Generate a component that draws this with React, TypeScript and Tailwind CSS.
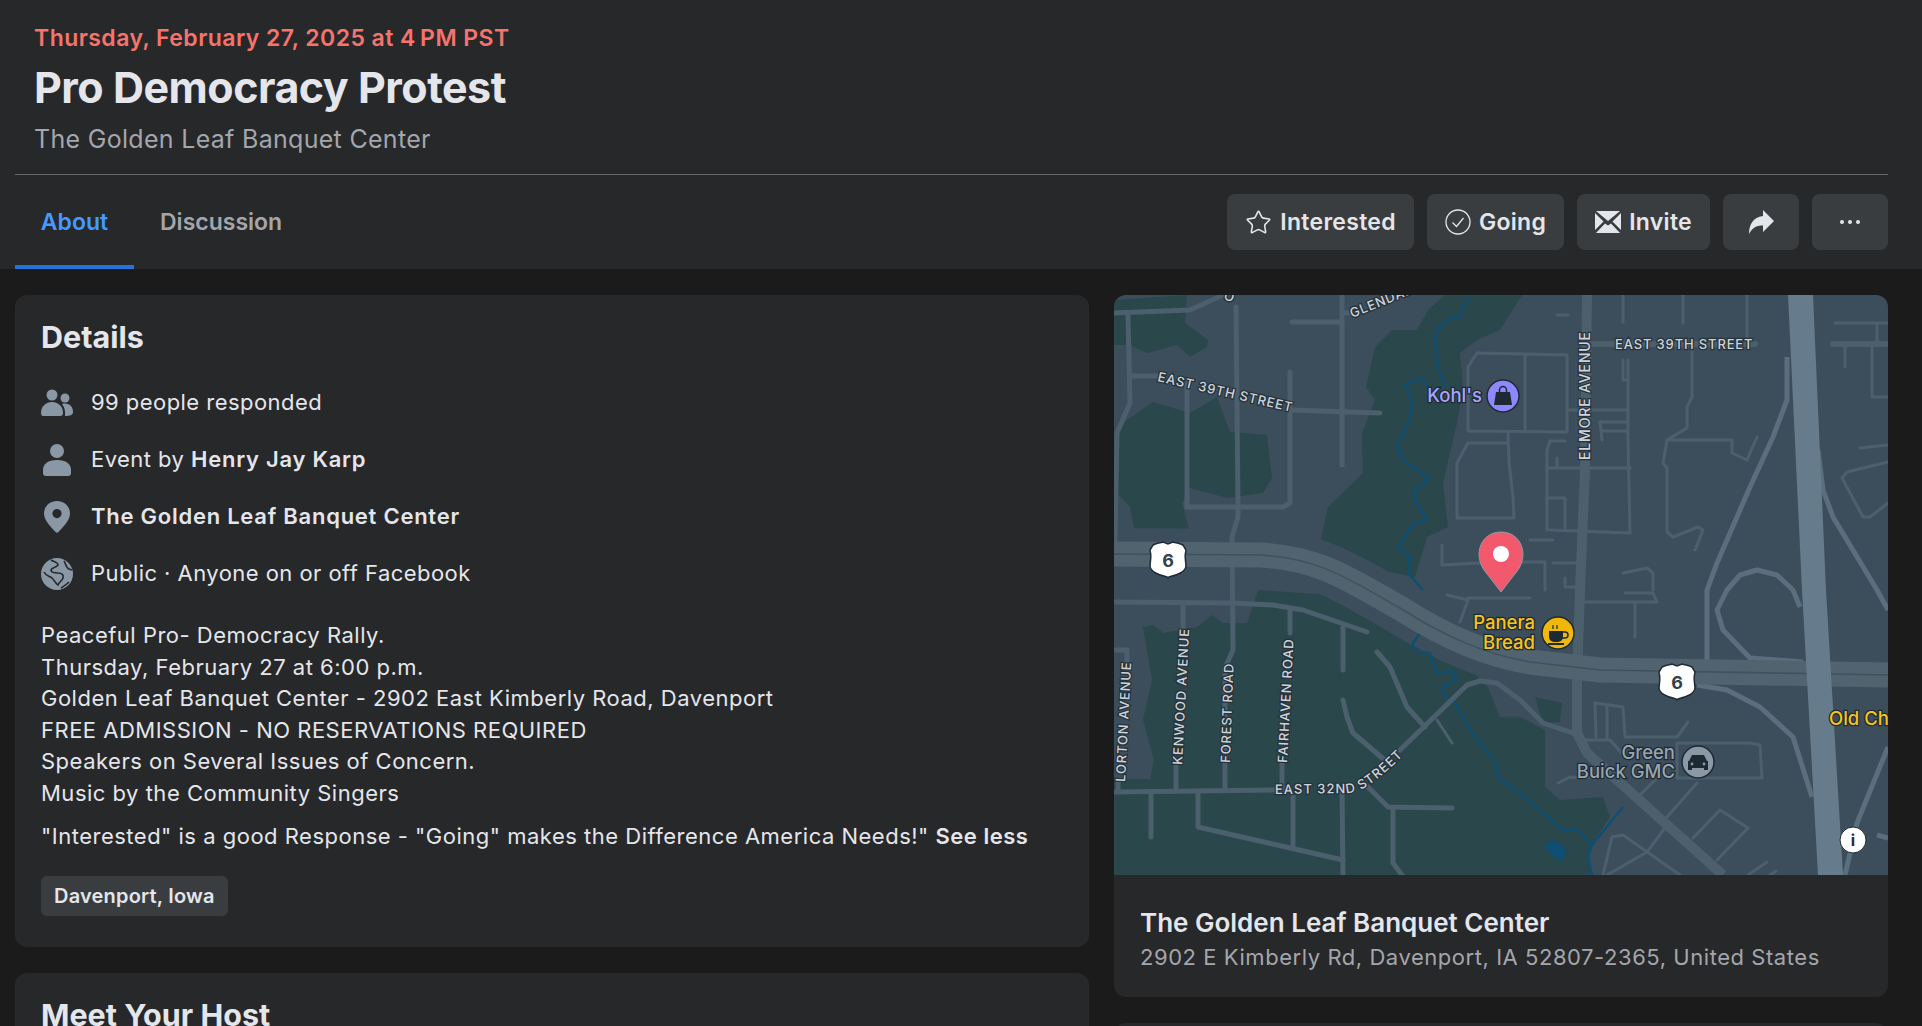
import { Star } from "lucide-react";

const thinRoads = [
  "1114,313 1190,310 1223,295",
  "1128,315 1130,403 1117,433 1115,542",
  "1130,376 1157,376",
  "1187,382 1187,507 1283,507 1290,503 1290,372",
  "1290,410 1380,413",
  "1342,297 1342,465",
  "1292,322 1342,322",
  "1343,313 1352,313",
  "1236,307 1238,507 1238,517 1232,537 1233,650 1225,668 1225,790",
  "1114,602 1233,603 1273,605 1303,610 1367,632",
  "1183,605 1183,627",
  "1176,765 1176,790",
  "1290,610 1290,633",
  "1282,763 1282,790",
  "1114,792 1277,790",
  "1151,792 1151,837",
  "1198,792 1198,827 1343,860",
  "1293,793 1293,847",
  "1342,790 1343,875",
  "1343,627 1343,670",
  "1343,700 1347,717 1353,733 1387,762",
  "1377,652 1390,667 1407,707 1425,727",
  "1400,750 1467,685 1480,681 1497,683 1520,700 1543,723 1573,733",
  "1368,787 1388,807 1452,808",
  "1393,808 1393,863 1402,875",
  "1114,650 1127,650 1127,662",
  "1118,782 1118,792",
];

const lotRoads = [
  "1468,430 1468,367 1477,353 1567,355 1567,432 1468,431",
  "1525,355 1525,432",
  "1508,432 1509,463 1513,497 1514,518 1457,518 1457,463 1468,443 1508,443",
  "1442,545 1442,565 1480,563",
  "1568,410 1628,410",
  "1628,360 1628,437 1630,533 1550,530",
  "1623,360 1623,380 1628,380",
  "1600,422 1628,422",
  "1600,422 1602,440",
  "1602,431 1628,431",
  "1547,468 1630,468",
  "1565,441 1550,441 1547,450 1547,530",
  "1547,498 1565,498 1565,528",
  "1557,458 1557,468",
  "1530,540 1553,540",
  "1517,562 1545,562 1545,590",
  "1553,563 1578,563",
  "1565,578 1565,587 1577,587",
  "1623,573 1647,568 1653,573 1653,590",
  "1623,295 1623,322",
  "1683,295 1683,323",
  "1747,295 1747,337",
  "1557,315 1568,315",
  "1692,350 1692,397 1687,407 1687,428 1667,440 1663,463 1667,468 1667,532 1673,537 1698,527 1703,530 1695,550",
  "1667,440 1732,440 1732,453 1747,460 1757,437",
  "1835,323 1888,323",
  "1877,323 1877,342",
  "1845,347 1845,367",
  "1872,347 1872,397 1888,397",
  "1860,448 1888,445",
  "1888,462 1847,472 1842,478 1863,517 1870,517 1888,503",
  "1447,595 1468,600 1460,622",
  "1468,598 1530,598",
  "1583,602 1657,602 1653,593 1625,593",
  "1635,603 1635,637",
  "1437,720 1452,743",
  "1595,703 1623,707 1625,737 1677,737 1688,722",
  "1595,703 1596,737",
  "1607,705 1607,740",
  "1583,740 1610,740 1625,757",
  "1677,743 1750,743 1760,745 1762,778 1677,778 1677,743",
  "1640,795 1657,778",
  "1667,817 1697,783",
  "1693,838 1720,810 1748,828 1717,860",
  "1647,852 1665,828",
  "1603,875 1612,837 1623,835 1680,875",
  "1607,875 1647,852",
  "1748,875 1767,862",
  "1770,875 1776,871",
  "1558,783 1570,777 1605,778",
];

function StreetLabel({ x, y, angle, size = 13, children }: { x: number; y: number; angle: number; size?: number; children: string }) {
  return (
    <text
      transform={`translate(${x} ${y}) rotate(${angle})`}
      fill="#ced4da"
      stroke="#26323b"
      strokeWidth="2.5"
      fontSize={size}
      fontWeight="500"
      letterSpacing="0.85"
      className="[paint-order:stroke]"
    >
      {children}
    </text>
  );
}

function Shield({ x, y }: { x: number; y: number }) {
  return (
    <g transform={`translate(${x} ${y})`}>
      <path
        d="M-15 -15 C-11 -17 -8 -17 -5 -18 L0 -16 L5 -18 C8 -17 11 -17 15 -15 C16 -13 18 -11 18 -9 C16 -4 18 2 18 6 C17 13 8 15 1 17 L0 18 L-1 17 C-8 15 -17 13 -18 6 C-18 2 -16 -4 -18 -9 C-18 -11 -16 -13 -15 -15 Z"
        fill="#fff"
        stroke="#1f2b34"
        strokeWidth="1.5"
      />
      <text y="7" textAnchor="middle" fontSize="18" fontWeight="700" fill="#33414d">6</text>
    </g>
  );
}

function PoiText({ x, y, fill, children, size = 18.5 }: { x: number; y: number; fill: string; children: string; size?: number }) {
  return (
    <text x={x} y={y} textAnchor="end" fontSize={size} fontWeight="500" fill={fill} stroke="#1e2a33" strokeWidth="2.5" className="[paint-order:stroke]">
      {children}
    </text>
  );
}

function MapView() {
  return (
    <svg viewBox="1114 295 774 580" className="block h-[580px] w-[774px] bg-[#3c4e5c] font-['Inter',sans-serif]">
      {/* parks */}
      <g fill="#2a474c">
        <polygon points="1114,300 1187,295 1185,323 1208,340 1207,347 1190,357 1177,345 1147,353 1130,345 1114,345" />
        <polygon points="1120,425 1153,402 1190,413 1217,397 1230,432 1267,435 1272,478 1263,493 1227,498 1190,488 1182,503 1190,533 1135,533 1130,507 1117,493 1118,433" />
        <polygon points="1428,310 1445,295 1522,295 1500,330 1477,340 1460,353 1463,390 1457,423 1443,483 1448,527 1427,537 1415,577 1380,570 1318,552 1328,507 1363,473 1362,433 1375,400 1366,387 1375,347 1392,330 1417,330" />
        <polygon points="1143,627 1153,625 1163,633 1197,627 1212,615 1223,623 1247,623 1258,590 1400,600 1488,687 1500,717 1520,717 1545,730 1545,787 1560,800 1603,797 1610,817 1590,847 1590,875 1114,875 1114,779 1150,779 1154,760 1143,720 1152,680" />
        <polygon points="1535,697 1562,703 1560,722 1543,723" />
      </g>

      {/* band under the highway */}
      <path d="M1114 554 L1260 555 C1320 558 1350 580 1400 608 C1450 640 1490 655 1530 662" fill="none" stroke="#3c4e5c" strokeWidth="52" />

      {/* river */}
      <g fill="none" stroke="#0e4f73" strokeWidth="2.5" strokeLinejoin="round">
        <polyline points="1470,295 1462,310 1460,317 1450,318 1438,328 1435,337 1438,367 1444,383 1444,388" />
        <polyline points="1427,385 1420,378 1405,385 1412,400 1410,420 1397,447 1403,460 1428,477 1427,482 1415,488 1415,500 1427,520 1412,525 1398,547 1410,557 1408,573 1423,590" />
        <polyline points="1420,633 1412,645 1420,652 1430,653 1437,673 1452,671 1457,678 1442,688 1445,697 1455,703 1472,733 1495,762 1498,778 1520,793 1563,830 1578,830 1592,845 1588,857 1592,875" />
        <polyline points="1592,845 1623,807" />
      </g>
      <polygon points="1545,845 1553,840 1565,847 1565,857 1560,862 1545,848" fill="#0e4f73" />

      {/* streets */}
      <g fill="none" stroke="#4c5f6d" strokeWidth="5" strokeLinecap="round" strokeLinejoin="round">
        {thinRoads.map((p) => (
          <polyline key={p} points={p} />
        ))}
      </g>
      <g fill="none" stroke="#4c5f6d" strokeWidth="3" strokeLinecap="round" strokeLinejoin="round">
        {lotRoads.map((p) => (
          <polyline key={p} points={p} />
        ))}
      </g>
      <g fill="none" stroke="#4c5f6d" strokeWidth="6" strokeLinecap="round">
        <polyline points="1593,344 1755,344" />
        <polyline points="1833,344 1888,344" />
        <polyline points="1587,295 1585,470 1580,590 1577,683 1577,733 1587,753 1723,875" strokeWidth="10" strokeLinecap="butt" />
      </g>

      {/* ramps */}
      <g fill="none" stroke="#5a6e7d" strokeWidth="5" strokeLinejoin="round">
        <polyline points="1787,357 1787,400 1773,437 1750,487 1717,563 1707,590 1707,660" />
        <path d="M1803 662 L1750 658 L1723 630 L1717 610 L1727 590 L1740 575 L1757 570 L1777 575 L1793 590 L1800 607" />
        <polyline points="1818,450 1823,490 1833,517 1877,590 1888,610" />
        <path d="M1697 685 L1727 690 L1760 707 L1793 737 L1812 797" />
        <polyline points="1888,747 1857,823 1845,875" />
        <polyline points="1877,835 1888,838" />
      </g>

      {/* highway 6 */}
      <path d="M1114 554 L1260 555 C1320 558 1350 580 1400 608 C1450 640 1490 655 1530 662 L1600 670 L1888 675" fill="none" stroke="#50636f" strokeWidth="25" />
      <path d="M1114 554 L1260 555 C1320 558 1350 580 1400 608 C1450 640 1490 655 1530 662 L1600 670 L1888 675" fill="none" stroke="#3f5260" strokeWidth="1.5" />

      {/* interstate */}
      <polygon points="1788,295 1813,295 1826,590 1843,875 1818,875 1802,590" fill="#667b8b" />

      {/* street names */}
      <StreetLabel x={1157} y={381} angle={13}>EAST 39TH STREET</StreetLabel>
      <StreetLabel x={1352} y={318} angle={-22}>GLENDALE</StreetLabel>
      <StreetLabel x={1223} y={299} angle={20}>O</StreetLabel>
      <StreetLabel x={1590} y={460} angle={-90} size={14}>ELMORE AVENUE</StreetLabel>
      <StreetLabel x={1615} y={349} angle={0}>EAST 39TH STREET</StreetLabel>
      <StreetLabel x={1125} y={782} angle={-87}>LORTON AVENUE</StreetLabel>
      <StreetLabel x={1182} y={765} angle={-87}>KENWOOD AVENUE</StreetLabel>
      <StreetLabel x={1230} y={763} angle={-88}>FOREST ROAD</StreetLabel>
      <StreetLabel x={1287} y={763} angle={-87}>FAIRHAVEN ROAD</StreetLabel>
      <path id="east-32" d="M1275 794 L1350 793 C1362 792 1378 780 1404 755" fill="none" />
      <text fill="#ced4da" stroke="#26323b" strokeWidth="2.5" fontSize="13" fontWeight="500" letterSpacing="1" className="[paint-order:stroke]">
        <textPath href="#east-32">EAST 32ND STREET</textPath>
      </text>

      <Shield x={1168} y={560} />
      <Shield x={1677} y={682} />

      {/* kohl's */}
      <PoiText x={1482} y={402} fill="#a9a4ff">Kohl's</PoiText>
      <circle cx="1503" cy="396" r="16" fill="#8f87ff" stroke="#1e2a33" strokeWidth="1.5" />
      <path d="M1496 392 H1510 L1512 405 H1494 Z" fill="#1e2a33" />
      <path d="M1499.5 393 V390 A3.5 3.5 0 0 1 1506.5 390 V393" fill="none" stroke="#1e2a33" strokeWidth="1.5" />

      {/* panera */}
      <PoiText x={1535} y={629} fill="#f5c518">Panera</PoiText>
      <PoiText x={1535} y={649} fill="#f5c518">Bread</PoiText>
      <circle cx="1558" cy="633" r="16" fill="#f1b80c" stroke="#1e2a33" strokeWidth="1.5" />
      <path d="M1549 631 H1563 V637 A5 5 0 0 1 1558 642 H1554 A5 5 0 0 1 1549 637 Z M1548 643 H1564 V645 H1548 Z" fill="#1e2a33" />
      <path d="M1563 632 H1565 A3 3 0 0 1 1565 638 H1562" fill="none" stroke="#1e2a33" strokeWidth="1.5" />
      <path d="M1553 629 V625 M1557 629 V625" stroke="#1e2a33" strokeWidth="1.2" />

      {/* green buick */}
      <PoiText x={1675} y={759} fill="#98a5af">Green</PoiText>
      <PoiText x={1675} y={778} fill="#98a5af">Buick GMC</PoiText>
      <circle cx="1698" cy="762" r="16" fill="#8a99a5" stroke="#1e2a33" strokeWidth="1.5" />
      <path d="M1692 755 H1704 L1707 761 H1708 V770 H1704 V768 H1692 V770 H1688 V761 H1689 Z" fill="#1e2a33" />
      <circle cx="1692" cy="764" r="1.4" fill="#8a99a5" />
      <circle cx="1704" cy="764" r="1.4" fill="#8a99a5" />

      <text x="1829" y="725" fontSize="18.5" fontWeight="500" fill="#f5c518" stroke="#1e2a33" strokeWidth="2.5" className="[paint-order:stroke]">Old Chi</text>

      {/* pin */}
      <path d="M1501 592 L1484 570 C1473 554 1481 532 1501 532 C1521 532 1529 554 1518 570 Z" fill="#f3596d" stroke="#8f98a0" strokeWidth="1" />
      <circle cx="1501" cy="554" r="8" fill="#fff" />

      {/* info */}
      <circle cx="1853" cy="840" r="13" fill="#fff" stroke="#1e2a33" strokeWidth="1" />
      <text x="1853" y="846" textAnchor="middle" fontSize="16" fontWeight="700" fill="#1e2a33">i</text>
    </svg>
  );
}

function PeopleIcon() {
  return (
    <svg viewBox="0 0 32 28" className="h-7 w-8 fill-[#8a98a5]">
      <circle cx="11" cy="6" r="5.5" />
      <circle cx="24" cy="9" r="4.5" />
      <path d="M0 24 C0 17 5 13 11 13 C17 13 22 17 22 24 C22 26 21 27 19 27 H2 C1 27 0 26 0 24 Z" />
      <path d="M24 27 C24.5 22 23.5 18 21 15 C22 14.5 23 14.5 24 14.5 C29 14.5 32 18 32 23 C32 26 29 27 24 27 Z" />
    </svg>
  );
}

function PersonIcon() {
  return (
    <svg viewBox="0 0 28 32" className="h-8 w-7 fill-[#8a98a5]">
      <circle cx="14" cy="7" r="7" />
      <path d="M0 26 C0 20 5 16 14 16 C23 16 28 20 28 26 V29 C28 31 27 32 25 32 H3 C1 32 0 31 0 29 Z" />
    </svg>
  );
}

function PinIcon() {
  return (
    <svg viewBox="0 0 26 32" className="h-8 w-[26px] fill-[#8a98a5]">
      <path fillRule="evenodd" d="M13 0 C5.5 0 0 5.5 0 12.5 C0 20 8 27 11.5 31 C12.3 32 13.7 32 14.5 31 C18 27 26 20 26 12.5 C26 5.5 20.5 0 13 0 Z M13 8 A4.6 4.6 0 1 1 13 17.2 A4.6 4.6 0 1 1 13 8 Z" />
    </svg>
  );
}

function GlobeIcon() {
  return (
    <svg viewBox="0 0 32 32" className="h-8 w-8">
      <circle cx="16" cy="16" r="16" fill="#8a98a5" />
      <path d="M10 2 C13 4 17 4 17 7 C15 10 11 9 10 12 C10 15 14 15 17 15 C21 15 23 17 22 20 C21 23 18 24 17 27 C15 26 13 22 11 20 C8 18 5 18 3 14 M23 3 C25 6 25 10 28 11 L31 12 M20 30 C23 28 25 27 28 24" fill="none" stroke="#27282a" strokeWidth="1.6" />
    </svg>
  );
}

function ActionButton({ icon, label }: { icon: React.ReactNode; label?: string }) {
  return (
    <button className={`flex h-14 items-center justify-center gap-2 rounded-lg bg-[#3a3d3f] text-[23px] font-semibold tracking-[0.3px] text-[#e4e6eb] ${label ? "px-[18px]" : "w-[76px]"}`}>
      {icon}
      {label}
    </button>
  );
}

export default function App() {
  return (
    <div className="flex h-[1026px] flex-col overflow-hidden bg-[#1b1b1b] font-['Inter',sans-serif] text-[#e4e6eb]">
      <header className="h-[269px] shrink-0 bg-[#27282a] pr-[34px] pl-[15px]">
        <div className="h-[175px] border-b border-[#65676b] px-[19px] pt-[23px]">
          <p className="text-[23px] leading-[30px] font-semibold tracking-[0.45px] text-[#f7736b]">Thursday, February 27, 2025 at 4{"\u2009"}PM PST</p>
          <h1 className="mt-[8px] text-[43px] leading-[52px] font-bold tracking-[-0.5px]">Pro Democracy Protest</h1>
          <p className="mt-[10px] text-[25px] leading-[32px] tracking-[0.3px] text-[#a4a6ab]">The Golden Leaf Banquet Center</p>
        </div>
        <div className="flex h-[94px] items-start justify-between">
          <nav className="flex h-[94px] text-[23px] font-semibold">
            <a className="flex w-[119px] items-center justify-center border-y-4 border-t-transparent border-b-[#2374e1] text-[#4599ff]">About</a>
            <a className="ml-[26px] flex items-center text-[#a4a6ab]">Discussion</a>
          </nav>
          <div className="mt-[19px] flex gap-[13px]">
            <ActionButton icon={<Star size={27} strokeWidth={1.4} />} label="Interested" />
            <ActionButton
              icon={
                <svg viewBox="0 0 26 26" className="h-[26px] w-[26px] fill-none stroke-current stroke-[1.3]">
                  <circle cx="13" cy="13" r="12" />
                  <path d="M7.5 13.5 L11.5 17.5 L18.5 9" />
                </svg>
              }
              label="Going"
            />
            <ActionButton
              icon={
                <svg viewBox="0 0 26 22" className="h-[22px] w-[26px] fill-current">
                  <path d="M1 0 H25 L13 10 Z M0 2 L8.5 10.5 L0 19 Z M26 2 L17.5 10.5 L26 19 Z M1 22 L10 12.5 L13 14.5 L16 12.5 L25 22 Z" />
                </svg>
              }
              label="Invite"
            />
            <ActionButton
              icon={
                <svg viewBox="0 0 26 24" className="h-6 w-[26px] fill-current">
                  <path d="M15 0 L26 11 L15 22 V15.5 C8 15.5 4 18 1 24 C1 15 5 7 15 6 Z" />
                </svg>
              }
            />
            <ActionButton
              icon={
                <svg viewBox="0 0 20 4" className="h-1 w-5 fill-current">
                  <circle cx="2" cy="2" r="2" />
                  <circle cx="10" cy="2" r="2" />
                  <circle cx="18" cy="2" r="2" />
                </svg>
              }
            />
          </div>
        </div>
      </header>

      <main className="flex gap-[25px] px-[15px] pt-[26px]">
        <div className="flex w-[1074px] shrink-0 flex-col gap-[26px]">
          <section className="h-[652px] rounded-xl bg-[#27282a] px-[26px] pt-[22px]">
            <h2 className="text-[30.5px] leading-[40px] font-bold">Details</h2>
            <ul className="mt-[17px] flex flex-col text-[22px] tracking-[0.45px]">
              <li className="flex h-[57px] items-center">
                <span className="flex w-[50px] justify-start"><PeopleIcon /></span>
                <span>99 people responded</span>
              </li>
              <li className="flex h-[57px] items-center">
                <span className="flex w-[50px] justify-start pl-[2px]"><PersonIcon /></span>
                <span>Event by <b className="font-semibold tracking-[0.75px]">Henry Jay Karp</b></span>
              </li>
              <li className="flex h-[57px] items-center">
                <span className="flex w-[50px] justify-start pl-[3px]"><PinIcon /></span>
                <b className="font-semibold tracking-[0.75px]">The Golden Leaf Banquet Center</b>
              </li>
              <li className="flex h-[57px] items-center">
                <span className="flex w-[50px] justify-start"><GlobeIcon /></span>
                <span>Public · Anyone on or off Facebook</span>
              </li>
            </ul>
            <div className="mt-[18px] text-[22px] leading-[31.6px] tracking-[0.5px]">
              <p>Peaceful Pro- Democracy Rally.</p>
              <p>Thursday, February 27 at 6:00 p.m.</p>
              <p>Golden Leaf Banquet Center - 2902 East Kimberly Road, Davenport</p>
              <p>FREE ADMISSION - NO RESERVATIONS REQUIRED</p>
              <p>Speakers on Several Issues of Concern.</p>
              <p>Music by the Community Singers</p>
              <p className="mt-[11px]">"Interested" is a good Response - "Going" makes the Difference America Needs!" <b className="font-semibold">See less</b></p>
            </div>
            <span className="mt-[24px] inline-flex h-10 items-center rounded-md bg-[#3a3d3f] px-[13px] text-[20px] font-semibold tracking-[0.2px]">Davenport, Iowa</span>
          </section>
          <section className="rounded-xl bg-[#27282a] px-[26px] pt-[22px] pb-8">
            <h2 className="text-[30.5px] leading-[40px] font-bold">Meet Your Host</h2>
          </section>
        </div>

        <div className="flex w-[774px] shrink-0 flex-col gap-[26px]">
          <section className="overflow-hidden rounded-xl bg-[#27282a]">
            <MapView />
            <div className="h-[122px] px-[26px] pt-[32px]">
              <h3 className="text-[26px] leading-[32px] font-semibold">The Golden Leaf Banquet Center</h3>
              <p className="mt-[3px] text-[22px] leading-[30px] tracking-[0.55px] text-[#a4a6ab]">2902 E Kimberly Rd, Davenport, IA 52807-2365, United States</p>
            </div>
          </section>
          <section className="h-20 rounded-xl bg-[#27282a]" />
        </div>
      </main>
    </div>
  );
}
